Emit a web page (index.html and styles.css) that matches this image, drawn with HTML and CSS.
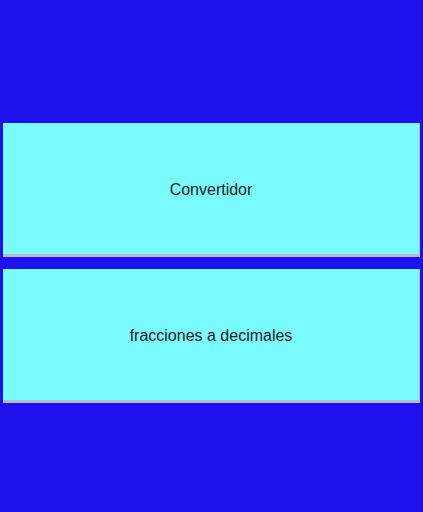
FILE: index.html
```html
<!DOCTYPE html>
<html lang="es">
<head>
<meta charset="utf-8">
<title>Convertidor</title>
<link rel="stylesheet" href="styles.css">
</head>
<body>
<main class="screen">
  <div class="panel"><span class="label">Convertidor</span></div>
  <div class="panel"><span class="label">fracciones a decimales</span></div>
</main>
</body>
</html>
```
FILE: styles.css
```css
html, body {
  margin: 0;
  padding: 0;
  height: 100%;
}
body {
  background: #1f12ef;
  font-family: "Liberation Sans", Arial, sans-serif;
}
.screen {
  box-sizing: border-box;
  height: 512px;
  padding: 123px 3px 0 3px;
  display: flex;
  flex-direction: column;
  gap: 12px;
  border-right: 1px solid #1a10c8;
}
.panel {
  box-sizing: border-box;
  width: 417px;
  height: 134px;
  padding-top: 2px;
  background: #7afbff;
  border-right: 1px solid #b8c4cc;
  border-bottom: 3px solid #b9bec4;
  display: flex;
  align-items: center;
  justify-content: center;
}
.label {
  font-size: 16px;
  color: #1c1c1c;
  line-height: 1;
}
```
